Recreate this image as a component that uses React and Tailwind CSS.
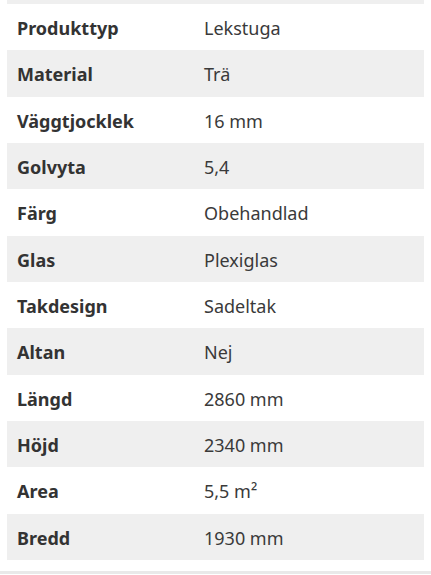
const specs = [
  ["Produkttyp", "Lekstuga"],
  ["Material", "Trä"],
  ["Väggtjocklek", "16 mm"],
  ["Golvyta", "5,4"],
  ["Färg", "Obehandlad"],
  ["Glas", "Plexiglas"],
  ["Takdesign", "Sadeltak"],
  ["Altan", "Nej"],
  ["Längd", "2860 mm"],
  ["Höjd", "2340 mm"],
  ["Area", "5,5 m²"],
  ["Bredd", "1930 mm"],
];

export default function App() {
  return (
    <div className="relative h-[575px] w-[431px] overflow-hidden bg-white font-['Noto_Sans',sans-serif] text-[#333]">
      <div className="mx-[7px] h-[4px] bg-[#efefef]"></div>
      <div className="mx-[7px] flex flex-col">
        {specs.map(([label, value], i) => (
          <div
            key={label}
            className={`flex h-[46.33px] items-center pt-[3px] text-[18px] ${i % 2 === 1 ? "bg-[#efefef]" : "bg-white"}`}
          >
            <span className="w-[197px] pl-[10px] font-bold">{label}</span>
            <span className="font-normal text-[#3a3a3a]">{value}</span>
          </div>
        ))}
      </div>
      <div className="mt-[11px] h-[3px] w-full bg-[#e9e9e9]"></div>
    </div>
  );
}
